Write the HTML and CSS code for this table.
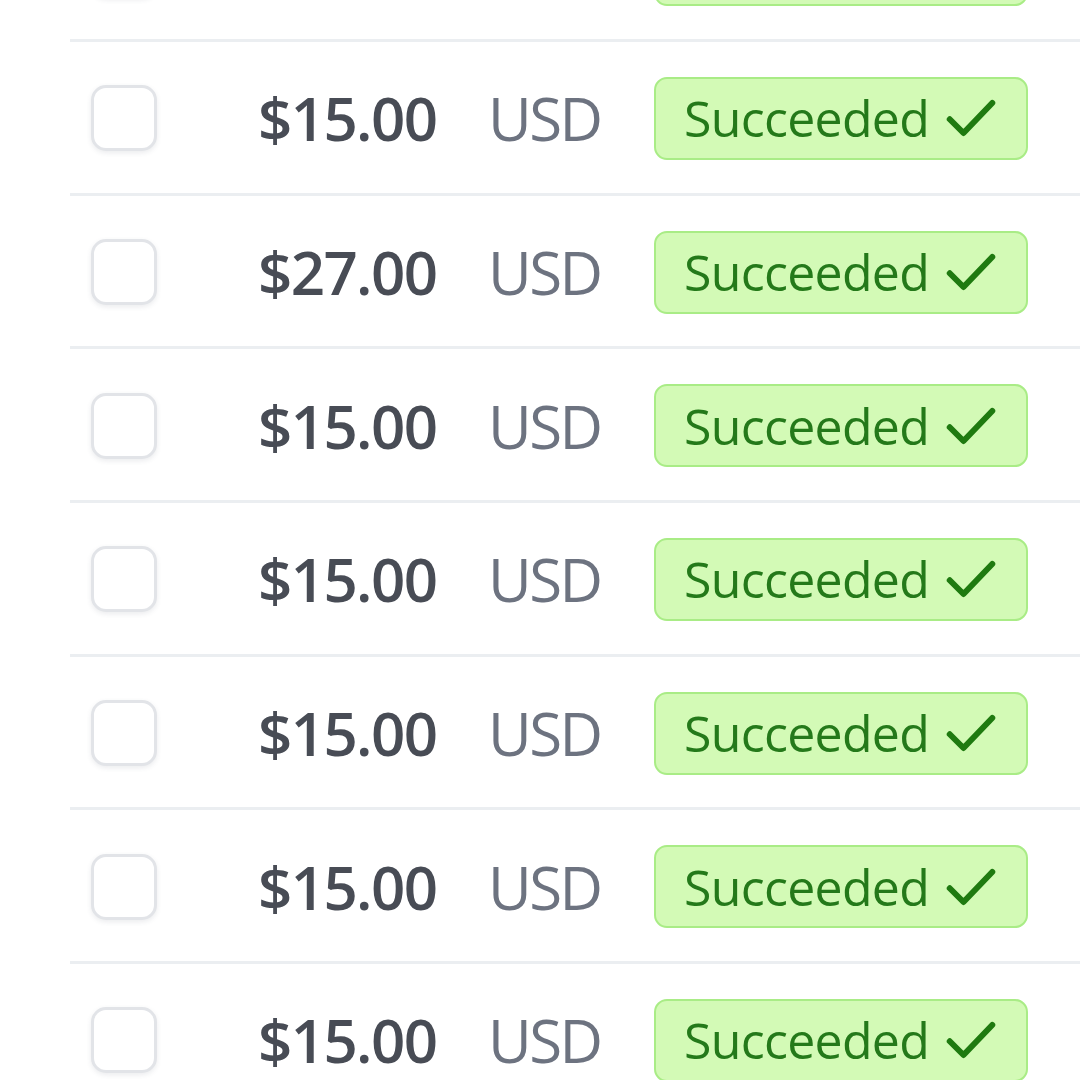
FILE: index.html
```html
<!DOCTYPE html>
<html>
<head>
<meta charset="utf-8">
<link rel="stylesheet" href="styles.css">
</head>
<body>
<div class="table">
  <div class="row">
    <div class="cell check"><span class="box"></span></div>
    <div class="cell amount">$15.00</div>
    <div class="cell cur">USD</div>
    <div class="cell status"><span class="badge">Succeeded <svg class="tick" viewBox="0 0 24 24"><path d="M3.5 12.5l5.5 5.5L20.5 6"/></svg></span></div>
  </div>
  <div class="row">
    <div class="cell check"><span class="box"></span></div>
    <div class="cell amount">$15.00</div>
    <div class="cell cur">USD</div>
    <div class="cell status"><span class="badge">Succeeded <svg class="tick" viewBox="0 0 24 24"><path d="M3.5 12.5l5.5 5.5L20.5 6"/></svg></span></div>
  </div>
  <div class="row">
    <div class="cell check"><span class="box"></span></div>
    <div class="cell amount">$27.00</div>
    <div class="cell cur">USD</div>
    <div class="cell status"><span class="badge">Succeeded <svg class="tick" viewBox="0 0 24 24"><path d="M3.5 12.5l5.5 5.5L20.5 6"/></svg></span></div>
  </div>
  <div class="row">
    <div class="cell check"><span class="box"></span></div>
    <div class="cell amount">$15.00</div>
    <div class="cell cur">USD</div>
    <div class="cell status"><span class="badge">Succeeded <svg class="tick" viewBox="0 0 24 24"><path d="M3.5 12.5l5.5 5.5L20.5 6"/></svg></span></div>
  </div>
  <div class="row">
    <div class="cell check"><span class="box"></span></div>
    <div class="cell amount">$15.00</div>
    <div class="cell cur">USD</div>
    <div class="cell status"><span class="badge">Succeeded <svg class="tick" viewBox="0 0 24 24"><path d="M3.5 12.5l5.5 5.5L20.5 6"/></svg></span></div>
  </div>
  <div class="row">
    <div class="cell check"><span class="box"></span></div>
    <div class="cell amount">$15.00</div>
    <div class="cell cur">USD</div>
    <div class="cell status"><span class="badge">Succeeded <svg class="tick" viewBox="0 0 24 24"><path d="M3.5 12.5l5.5 5.5L20.5 6"/></svg></span></div>
  </div>
  <div class="row">
    <div class="cell check"><span class="box"></span></div>
    <div class="cell amount">$15.00</div>
    <div class="cell cur">USD</div>
    <div class="cell status"><span class="badge">Succeeded <svg class="tick" viewBox="0 0 24 24"><path d="M3.5 12.5l5.5 5.5L20.5 6"/></svg></span></div>
  </div>
  <div class="row">
    <div class="cell check"><span class="box"></span></div>
    <div class="cell amount">$15.00</div>
    <div class="cell cur">USD</div>
    <div class="cell status"><span class="badge">Succeeded <svg class="tick" viewBox="0 0 24 24"><path d="M3.5 12.5l5.5 5.5L20.5 6"/></svg></span></div>
  </div>
</div>
</body>
</html>
```
FILE: styles.css
```css
html, body {
  margin: 0;
  padding: 0;
  background: #ffffff;
  overflow: hidden;
  width: 1080px;
  height: 1080px;
}
.table {
  margin-top: -111.5px;
  padding-left: 70px;
}
.row {
  display: flex;
  align-items: center;
  height: 153.67px;
  box-sizing: border-box;
  padding-top: 2px;
  border-bottom: 3px solid #ebeef1;
  font-family: "Open Sans", "Noto Sans", sans-serif;
}
.cell {
  flex: none;
}
.check {
  width: 188px;
  padding-left: 21px;
  box-sizing: border-box;
  display: flex;
}
.box {
  width: 66px;
  height: 66px;
  box-sizing: border-box;
  border: 3px solid #e2e4e8;
  border-radius: 15px;
  box-shadow: 0 2px 5px rgba(60, 66, 87, 0.10);
  background: #fff;
}
.amount {
  width: 230px;
  font-size: 60px;
  font-weight: 600;
  color: #484c55;
  letter-spacing: -1.6px;
}
.cur {
  width: 166px;
  font-size: 60px;
  font-weight: 400;
  color: #6d7380;
  letter-spacing: -2.6px;
}
.badge {
  display: inline-flex;
  align-items: center;
  gap: 12px;
  box-sizing: border-box;
  width: 374px;
  height: 83px;
  padding-left: 28px;
  background: #d3fab6;
  border: 2px solid #a9ec86;
  border-radius: 13px;
  font-size: 50px;
  font-weight: 500;
  letter-spacing: -0.7px;
  color: #24791a;
}
.tick {
  width: 60px;
  height: 60px;
  fill: none;
  stroke: #1f7a10;
  stroke-width: 2.4;
  stroke-linecap: round;
  stroke-linejoin: round;
}
```
